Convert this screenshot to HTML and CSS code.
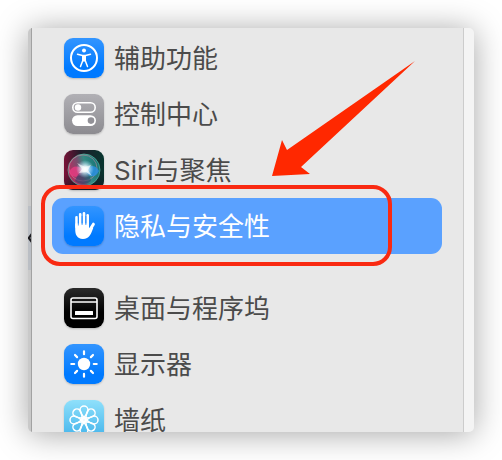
FILE: index.html
```html
<!DOCTYPE html>
<html lang="zh-CN">
<head>
  <meta charset="utf-8" />
  <meta name="viewport" content="width=device-width, initial-scale=1.0" />
  <title>系统设置</title>
  <link rel="stylesheet" href="styles.css">
</head>

<body>
  <div class="window">
    <div class="edge">
      <div class="edge-block">
        <svg width="3" height="14" viewBox="0 0 3 14"><path d="M4.500 2 0.800 7l3.700 5" fill="none" stroke="#1c1c20" stroke-width="2.200" /></svg>
      </div>
    </div>

    <nav class="sidebar">
      <ul class="menu">
        <li>
          <a class="item" href="#accessibility">
            <svg class="icon blue" viewBox="0 0 40 40">
              <circle cx="20" cy="20" r="13" fill="none" stroke="#fff" stroke-width="2" />
              <circle cx="20" cy="12.600" r="2" fill="#fff" />
              <path d="M13.500 16.200l5 1.300h3l5-1.300M18.800 17.500v5l-2.300 6M21.200 17.500v5l2.300 6" fill="none" stroke="#fff" stroke-width="1.500" stroke-linecap="round" stroke-linejoin="round" />
              <path d="M18 17h4v6.500h-4z" fill="#fff" />
            </svg>
            <span>辅助功能</span>
          </a>
        </li>
        <li>
          <a class="item" href="#control">
            <svg class="icon gray" viewBox="0 0 40 40">
              <rect x="8.800" y="8.800" width="22.400" height="9.400" rx="4.700" fill="none" stroke="#fff" stroke-width="1.600" />
              <circle cx="14" cy="13.500" r="3.200" fill="#fff" />
              <rect x="8" y="21.200" width="24" height="10.800" rx="5.400" fill="#fff" />
              <circle cx="27" cy="26.600" r="3.300" fill="#929197" />
            </svg>
            <span>控制中心</span>
          </a>
        </li>
        <li>
          <a class="item" href="#siri">
            <svg class="icon" viewBox="0 0 40 40">
              <defs>
                <linearGradient id="siri-bg" x1="0" y1="0.500" x2="1" y2="0.400">
                  <stop offset="0" stop-color="#7c1238" />
                  <stop offset="0.450" stop-color="#211c2a" />
                  <stop offset="1" stop-color="#08352f" />
                </linearGradient>
                <linearGradient id="siri-shade" x1="0" y1="0" x2="0" y2="1">
                  <stop offset="0.600" stop-color="#101820" stop-opacity="0" />
                  <stop offset="1" stop-color="#101820" stop-opacity="0.700" />
                </linearGradient>
                <linearGradient id="siri-orb" x1="0" y1="0.700" x2="1" y2="0.400">
                  <stop offset="0" stop-color="#c8235d" />
                  <stop offset="0.400" stop-color="#74506e" />
                  <stop offset="0.600" stop-color="#358982" />
                  <stop offset="1" stop-color="#147477" />
                </linearGradient>
                <radialGradient id="siri-glow">
                  <stop offset="0" stop-color="#fff" />
                  <stop offset="0.300" stop-color="#eefaff" stop-opacity="0.900" />
                  <stop offset="1" stop-color="#a8dfff" stop-opacity="0" />
                </radialGradient>
              </defs>
              <rect width="40" height="40" fill="url(#siri-bg)" />
              <rect width="40" height="40" fill="url(#siri-shade)" />
              <circle cx="20" cy="20" r="16" fill="url(#siri-orb)" />
              <circle cx="20" cy="20" r="16" fill="none" stroke="#58b7a4" stroke-opacity="0.700" stroke-width="1" />
              <ellipse cx="19" cy="18" rx="14" ry="13" fill="none" stroke="#d88ba3" stroke-opacity="0.500" />
              <path d="M20 21c5-7 12-6 15 0-3 7-10 7-15 0z" fill="#2a8fe0" fill-opacity="0.850" />
              <path d="M5 22c4-8 10-6 15-2-4 7-11 10-15 2z" fill="#e93c82" fill-opacity="0.800" />
              <path d="M11 31c3-8 6-10 9-11 4 2 6 6 7 11-5 4-11 4-16 0z" fill="#263b68" fill-opacity="0.500" />
              <circle cx="21" cy="19" r="9" fill="url(#siri-glow)" />
              <path d="M13 13l8 4 6-2-3 5 4 6-6-4-7 1 3-4z" fill="#fff" fill-opacity="0.600" />
            </svg>
            <span>Siri与聚焦</span>
          </a>
        </li>
        <li class="target">
          <a class="item selected" href="#privacy" aria-current="page">
            <svg class="icon blue" viewBox="0 0 40 40">
              <g fill="none" stroke="#fff" stroke-width="2.600" stroke-linecap="round">
                <path d="M12.500 21V11.200M16.200 20V8.200M20 20V7.300M23.700 20V9.400" />
                <path d="M24.800 25.500l4.600-7.300" stroke-width="3" />
              </g>
              <path d="M11.200 17.500H25v5.200l1.500-1.500 2.800.5c-1.500 4-2.800 8.300-6.300 10.300-2.300 1.200-5.900 1.200-8 0-3.200-1.800-3.800-5.300-3.800-9z" fill="#fff" />
              <path d="M14.350 11v8.500M18.100 10v9M21.850 10v9" stroke="#2389ff" stroke-width="0.800" fill="none" />
            </svg>
            <span>隐私与安全性</span>
          </a>
          <div class="ring"></div>
          <svg class="arrow" width="144" height="118" viewBox="0 0 144 118">
            <path d="M143 1 15 90 10 80 0 116 38 114 29 107z" fill="#ff2800" />
          </svg>
        </li>
      </ul>

      <ul class="menu">
        <li>
          <a class="item" href="#dock">
            <svg class="icon black" viewBox="0 0 40 40">
              <rect x="7" y="10" width="26" height="20.500" rx="2" fill="none" stroke="#fff" stroke-width="1.600" />
              <path d="M7 14h26" stroke="#fff" stroke-width="1.400" />
              <rect x="11" y="23" width="18" height="4" rx="0.500" fill="#fff" />
            </svg>
            <span>桌面与程序坞</span>
          </a>
        </li>
        <li>
          <a class="item" href="#display">
            <svg class="icon blue" viewBox="0 0 40 40">
              <circle cx="20" cy="20" r="6.200" fill="#fff" />
              <path d="M20 7.300v2.900M20 29.800v2.900M7.300 20h2.900M29.800 20h2.900M11 11l2.100 2.100M26.900 26.900l2.100 2.100M11 29l2.100-2.100M26.900 13.100l2.100-2.100" fill="none" stroke="#fff" stroke-width="2.200" stroke-linecap="round" />
            </svg>
            <span>显示器</span>
          </a>
        </li>
        <li>
          <a class="item" href="#wallpaper">
            <svg class="icon cyan" viewBox="0 0 40 40">
              <defs>
                <path id="petal" d="M22.500 21.500C21 17.500 16 14 16 10a4 4 0 0 1 8 0c0 4-5 7.500-6.500 11.500" />
              </defs>
              <g fill="none" stroke="#fff" stroke-width="1.500">
                <use href="#petal" />
                <use href="#petal" transform="rotate(45 20 20)" />
                <use href="#petal" transform="rotate(90 20 20)" />
                <use href="#petal" transform="rotate(135 20 20)" />
                <use href="#petal" transform="rotate(180 20 20)" />
                <use href="#petal" transform="rotate(225 20 20)" />
                <use href="#petal" transform="rotate(270 20 20)" />
                <use href="#petal" transform="rotate(315 20 20)" />
              </g>
            </svg>
            <span>墙纸</span>
          </a>
        </li>
      </ul>
    </nav>

    <div class="content"></div>
  </div>
</body>
</html>
```

FILE: styles.css
```css
* {
  box-sizing: border-box;
}

body {
  margin: 0;
  height: 100vh;
  padding: 28px;
  background: #fff;
  font-family: Inter, "Noto Sans CJK SC", sans-serif;
  font-size: 26px;
  line-height: 36px;
  color: #4b4b4b;
}

.window {
  display: flex;
  height: 100%;
  overflow: hidden;
  border-radius: 5px;
  background: #e8e8e8;
  box-shadow: 0 2px 32px rgba(0, 0, 0, 0.36);
}

.edge {
  flex: 0 0 4px;
  padding-top: 178px;
  background: #c9c9c9;
  border-right: 1px solid #a2a2a2;
}

.edge-block {
  height: 64px;
  padding-top: 25px;
  background: #babec4;
}

.edge-block svg {
  display: block;
}

.sidebar {
  flex: 1;
  padding: 2px 21px 0 20px;
  border-right: 1px solid #cccccc;
}

/* the settings pane that starts beside the sidebar */
.content {
  flex: 0 0 10px;
  background: #f4f4f4;
}

.menu {
  list-style: none;
  margin: 0 0 26px;
  padding: 0;
}

.item {
  display: flex;
  align-items: center;
  gap: 10px;
  padding: 8px 12px;
  border-radius: 11px;
  color: inherit;
  text-decoration: none;
  white-space: nowrap;
}

.item span {
  padding-top: 2px;
}

.selected {
  background: #5aa1ff;
  color: #fff;
}

.icon {
  flex: none;
  width: 40px;
  height: 40px;
  border-radius: 9px;
  box-shadow: 0 1px 2px rgba(0, 0, 0, 0.2);
}

.blue {
  background: linear-gradient(#3395ff, #007aff 75%);
}

.gray {
  background: linear-gradient(#b1b0b5, #8c8b90);
}

.black {
  background: linear-gradient(#2a2a2a, #000 60%);
}

.cyan {
  background: linear-gradient(#8fe0fb, #3fb1ea);
}

/* red marks drawn over the list */
.target {
  position: relative;
}

.ring {
  position: absolute;
  top: -13px;
  left: -11px;
  right: 50px;
  bottom: -12px;
  border: 4px solid #f92a12;
  border-radius: 19px;
  pointer-events: none;
}

.arrow {
  position: absolute;
  right: 26px;
  bottom: 76px;
  pointer-events: none;
}
```
